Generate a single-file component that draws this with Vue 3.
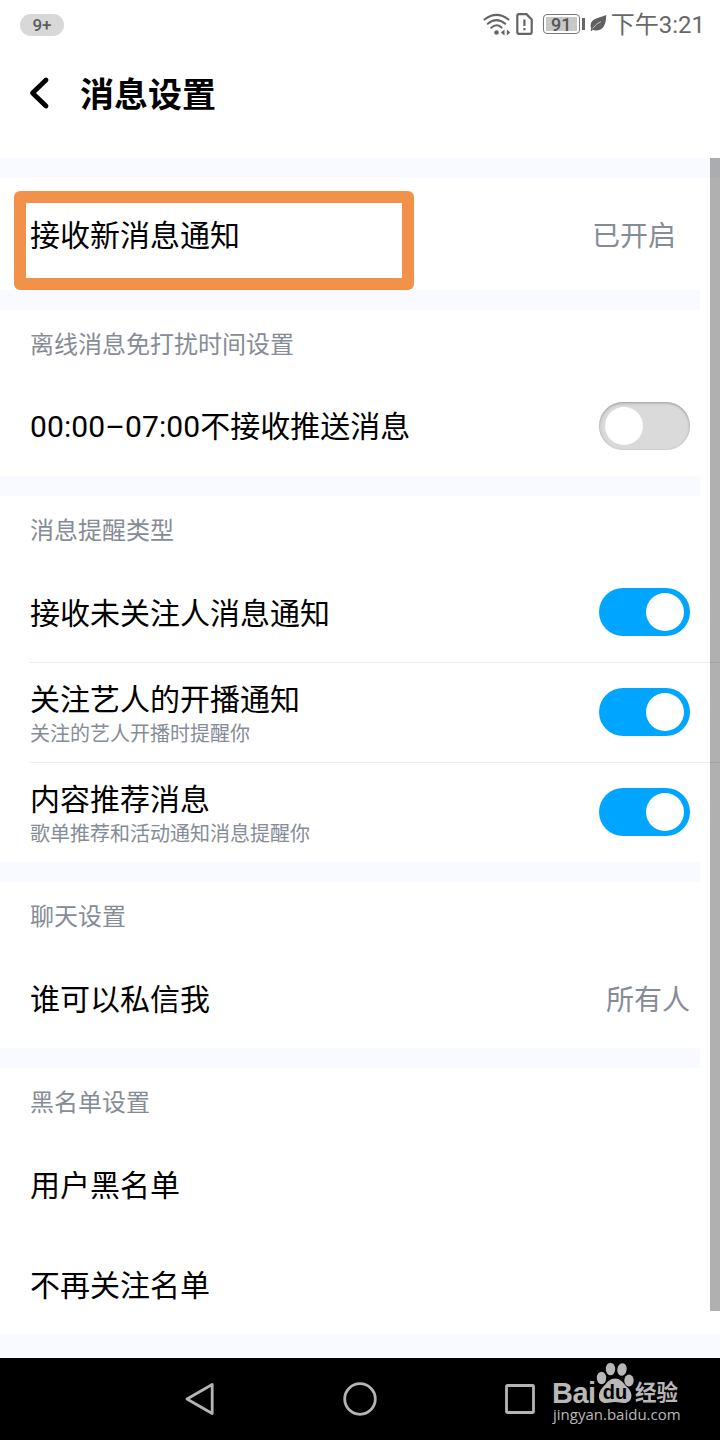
<script setup>
const sections = [
  { first: true, rows: [{ title: '接收新消息通知', value: '已开启', tall: true, marked: true }] },
  { label: '离线消息免打扰时间设置', rows: [{ title: '不接收推送消息', time: '00:00–07:00', toggle: 'off' }] },
  {
    label: '消息提醒类型',
    rows: [
      { title: '接收未关注人消息通知', toggle: 'on' },
      { title: '关注艺人的开播通知', sub: '关注的艺人开播时提醒你', toggle: 'on', line: true },
      { title: '内容推荐消息', sub: '歌单推荐和活动通知消息提醒你', toggle: 'on', line: true },
    ],
  },
  { label: '聊天设置', rows: [{ title: '谁可以私信我', value: '所有人' }] },
  { label: '黑名单设置', rows: [{ title: '用户黑名单' }, { title: '不再关注名单' }] },
]
</script>

<template>
  <div class="screen">
    <div class="status">
      <span class="badge">9+</span>
      <div class="indicators">
        <svg class="wifi" width="28" height="24" viewBox="0 0 28 24" fill="none" stroke="#656565" stroke-width="2" stroke-linecap="round">
          <path d="M1.500 6.500Q13.500-2.800 25.500 6.500M4.800 10.800Q13.500 3.500 22.200 10.800M8.300 14.800Q13.500 10 18.500 14.500" />
          <circle cx="13.500" cy="19.500" r="2.300" fill="#656565" stroke="none" />
          <path d="M21.500 16.500V22.500L17.800 19.500ZM23.800 16.500V22.500L27.300 19.500Z" fill="#656565" stroke="none" />
        </svg>
        <svg class="sim" width="17" height="22" viewBox="0 0 17 22" fill="none" stroke="#656565" stroke-width="2.200">
          <path d="M3 1.200H10.500L15.700 6.400V19Q15.700 20.800 14 20.800H3Q1.300 20.800 1.300 19V3Q1.300 1.200 3 1.200Z" />
          <path d="M8.400 6.500V13M8.400 15V17.300" />
        </svg>
        <span class="battery"><span class="level">91</span></span>
        <i class="tip"></i>
        <svg class="leaf" width="17" height="18" viewBox="0 0 17 18">
          <path d="M16.200 1Q16.200 16.500 6 16.500Q3.800 16.500 2.800 15.800L1.400 17.300L.7 16.500L1.200 14.500Q-1.500 7 7.500 4Q12.500 2.700 16.200 1Z" fill="#606060" />
          <path d="M2.500 14.500Q6 9.800 11 7.500" stroke="#ddd" stroke-width=".8" fill="none" />
        </svg>
        <span class="clock">下午<b>3:21</b></span>
      </div>
    </div>

    <header class="header">
      <svg width="22" height="34" viewBox="0 0 22 34" fill="none" stroke="#000" stroke-width="4.800" stroke-linecap="round" stroke-linejoin="round">
        <path d="M17 4L3.500 17L17 30" />
      </svg>
      <h1>消息设置</h1>
    </header>

    <main class="list">
      <section v-for="(s, i) in sections" :key="i" :class="{ first: s.first }">
        <h2 v-if="s.label">{{ s.label }}</h2>
        <div v-for="r in s.rows" :key="r.title" class="row" :class="{ tall: r.tall, line: r.line }">
          <div class="copy">
            <div class="title"><span v-if="r.time" class="time">{{ r.time }}</span>{{ r.title }}</div>
            <div v-if="r.sub" class="sub">{{ r.sub }}</div>
          </div>
          <span v-if="r.value" class="value">{{ r.value }}</span>
          <span v-if="r.toggle" class="toggle" :class="r.toggle"><i></i></span>
          <div v-if="r.marked" class="mark"></div>
        </div>
      </section>
      <div class="end"></div>
      <div class="scrollbar"></div>
    </main>

    <nav class="nav">
      <svg class="back" width="32" height="36" viewBox="0 0 32 36"><path d="M28.200 3.500V32.500L3 18Z" fill="none" stroke="#b4b4b4" stroke-width="2.800" stroke-linejoin="round" /></svg>
      <svg class="home" width="36" height="36" viewBox="0 0 36 36"><circle cx="18" cy="18" r="15.300" fill="none" stroke="#b4b4b4" stroke-width="2.800" /></svg>
      <svg class="recent" width="32" height="32" viewBox="0 0 32 32"><rect x="2.500" y="2.500" width="27" height="27" rx="1" fill="none" stroke="#b4b4b4" stroke-width="2.800" /></svg>
      <div class="brand">
        <div class="logo">
          <span class="bai">Bai</span>
          <div class="paw">
            <svg width="38" height="42" viewBox="0 0 38 42" fill="#b8b8b8">
              <ellipse cx="5.500" cy="16" rx="4.700" ry="6.200" />
              <ellipse cx="14.500" cy="7" rx="4.700" ry="6.300" />
              <ellipse cx="26" cy="7.500" rx="4.700" ry="6.300" transform="rotate(10 26 7.500)" />
              <ellipse cx="33" cy="18.500" rx="4.700" ry="6" />
              <path d="M19 16.500C25 16.500 27 21 31 25C38 31 36.500 41 28 41C24 41 23 40 19 40C15 40 14 41 10 41C1.500 41 1 31 7 25C11 21 13 16.500 19 16.500Z" />
            </svg>
            <span class="du">du</span>
          </div>
          <span class="jing">经验</span>
        </div>
        <div class="site">jingyan.baidu.com</div>
      </div>
    </nav>
  </div>
</template>

<style>
body { margin: 0; background: #fff; }
</style>

<style scoped>
* { box-sizing: border-box; }
.screen { width: 720px; height: 1440px; background: #fff; color: #000; overflow: hidden; font-family: "Noto Sans CJK SC", sans-serif; }
.status { height: 50px; display: flex; align-items: center; justify-content: space-between; padding: 0 16px 0 20px; }
.badge { width: 44px; height: 22px; border-radius: 11px; background: #d8d8d8; color: #5c5c5c; font: 500 17px/22px Roboto, sans-serif; text-align: center; }
.indicators { display: flex; align-items: center; color: #686868; }
.wifi { margin-top: -1px; }
.sim { margin-left: 5px; margin-right: 10px; margin-top: -2px; }
.battery { width: 37px; height: 20px; border: 1px solid #777; border-radius: 4px; padding: 2px; margin-top: -2px; }
.level { display: block; height: 14px; background: #c8c8c8; color: #555; font: 500 18px/15px Roboto, sans-serif; text-align: center; }
.tip { width: 3px; height: 12px; background: #666; margin: -2px 5px 0 2px; }
.leaf { margin-top: -4px; }
.clock { font-size: 24px; line-height: 36px; margin-left: 4px; margin-right: -1px; margin-top: -2px; white-space: nowrap; }
.clock b { font: 400 24px/36px Roboto, sans-serif; }
.header { height: 108px; padding: 26px 0 0 29px; display: flex; align-items: flex-start; }
.header h1 { font-size: 34px; line-height: 40px; font-weight: 700; margin: -3px 0 0 29px; }
.list { position: relative; }
section { border-top: 20px solid #f8faff; width: 700px; padding-left: 30px; }
section.first { width: 720px; }
h2 { font-size: 24px; font-weight: 400; line-height: 66px; height: 66px; color: #868c96; margin: 0; }
.row { position: relative; height: 100px; display: flex; align-items: center; justify-content: space-between; padding-right: 10px; }
.row.tall { height: 112px; padding-right: 44px; }
.line::before { content: ""; position: absolute; left: -1px; top: 0; width: 691px; height: 1px; background: #eeeeef; }
.copy { padding-bottom: 2px; }
.title { font-size: 30px; line-height: 40px; }
.time { font-family: Roboto, sans-serif; letter-spacing: .1px; }
.sub { font-size: 20px; line-height: 28px; margin-top: 2px; margin-bottom: -2px; color: #868c96; }
.value { font-size: 28px; line-height: 40px; color: #868c96; }
.toggle { width: 91px; height: 48px; border-radius: 24px; padding: 5px 6px; display: flex; }
.toggle i { width: 38px; height: 38px; border-radius: 50%; background: #fff; }
.on { background: #00a5ff; justify-content: flex-end; }
.off { background: #dadada; box-shadow: inset 0 1px 3px #999; }
.mark { position: absolute; left: -16px; top: 13px; width: 400px; height: 99px; border: 12px solid #f2924a; border-radius: 6px; }
.end { height: 24px; background: #f8faff; }
.scrollbar { position: absolute; right: 0; top: 0; width: 10px; height: 1153px; background: rgba(0, 0, 0, .31); }
.nav { height: 82px; background: #000; display: flex; align-items: center; padding-left: 184px; }
.home { margin-left: 126px; }
.recent { margin-left: 126px; }
.brand { margin-left: 16px; height: 82px; padding-top: 5px; color: #b8b8b8; }
.logo { display: flex; height: 41px; align-items: flex-end; }
.bai { font: 700 29px/28px "Liberation Sans", sans-serif; letter-spacing: -.5px; width: 44px; margin-bottom: -3px; }
.paw { position: relative; width: 38px; height: 42px; }
.du { position: absolute; left: 0; right: 0; bottom: 2px; text-align: center; color: #000; font: 700 20px/20px "Liberation Sans", sans-serif; }
.jing { font-size: 21.500px; line-height: 22px; font-weight: 700; margin-left: 1px; margin-bottom: 2px; }
.site { font: 400 15px/18px "Open Sans", sans-serif; margin-top: 1px; margin-left: 1px; white-space: nowrap; }
</style>
